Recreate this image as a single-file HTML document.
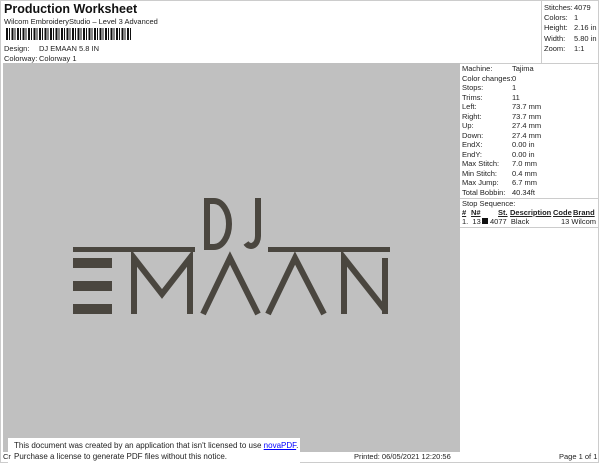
<!DOCTYPE html><html><head><style>
body{margin:0;width:600px;height:464px;background:#fff;font-family:"Liberation Sans",sans-serif;position:relative;overflow:hidden;color:#222}
.a{position:absolute;white-space:nowrap}
.s{font-size:7.5px}
</style></head><body>
<div class="a" style="left:0;top:0;width:599px;height:463px;border:1px solid #ccc;box-sizing:border-box"></div>
<div class="a" style="left:4px;top:2px;font-size:12.5px;font-weight:bold;color:#111">Production Worksheet</div>
<div class="a s" style="left:4px;top:17px">Wilcom EmbroideryStudio – Level 3 Advanced</div>
<div class="a" style="left:6px;top:28px;width:126px;height:12px;background:repeating-linear-gradient(90deg,#111 0 2px,#fff 2px 3px,#111 3px 4px,#fff 4px 5.5px)"></div>
<div class="a s" style="left:4px;top:44px">Design:</div><div class="a s" style="left:39px;top:44px">DJ EMAAN 5.8 IN</div>
<div class="a s" style="left:4px;top:54px">Colorway:</div><div class="a s" style="left:39px;top:54px">Colorway 1</div>
<div class="a" style="left:541px;top:0;width:1px;height:63px;background:#ccc"></div>
<div class="a s" style="left:544px;top:3px;line-height:10.2px">Stitches:<br>Colors:<br>Height:<br>Width:<br>Zoom:</div>
<div class="a s" style="left:574px;top:3px;line-height:10.2px">4079<br>1<br>2.16 in<br>5.80 in<br>1:1</div>
<div class="a" style="left:3px;top:63px;width:457px;height:389px;background:#c0c0c0"></div>
<div class="a" style="left:460px;top:63px;width:138px;height:1px;background:#ccc"></div>
<div class="a s" style="left:462px;top:64px;line-height:9.5px">Machine:<br>Color changes:<br>Stops:<br>Trims:<br>Left:<br>Right:<br>Up:<br>Down:<br>EndX:<br>EndY:<br>Max Stitch:<br>Min Stitch:<br>Max Jump:<br>Total Bobbin:</div>
<div class="a s" style="left:512px;top:64px;line-height:9.5px">Tajima<br>0<br>1<br>11<br>73.7 mm<br>73.7 mm<br>27.4 mm<br>27.4 mm<br>0.00 in<br>0.00 in<br>7.0 mm<br>0.4 mm<br>6.7 mm<br>40.34ft</div>
<div class="a" style="left:460px;top:198px;width:138px;height:1px;background:#ccc"></div>
<div class="a s" style="left:462px;top:199px">Stop Sequence:</div>
<div class="a s" style="left:462px;top:208px;font-weight:bold;text-decoration:underline">#</div>
<div class="a s" style="left:471px;top:208px;font-weight:bold;text-decoration:underline">N#</div>
<div class="a s" style="left:498px;top:208px;font-weight:bold;text-decoration:underline">St.</div>
<div class="a s" style="left:510px;top:208px;font-weight:bold;text-decoration:underline">Description</div>
<div class="a s" style="left:553px;top:208px;font-weight:bold;text-decoration:underline">Code</div>
<div class="a s" style="left:573px;top:208px;font-weight:bold;text-decoration:underline">Brand</div>
<div class="a s" style="left:462px;top:217px">1.&nbsp; 13</div>
<div class="a" style="left:482px;top:218px;width:6px;height:6px;background:#111"></div>
<div class="a s" style="left:490px;top:217px">4077&nbsp; Black</div>
<div class="a s" style="left:561px;top:217px">13 Wilcom</div>
<div class="a" style="left:460px;top:227px;width:138px;height:1px;background:#ccc"></div>
<svg class="a" style="left:0;top:0" width="600" height="464">
<g fill="#4a463f">
<rect x="73" y="247" width="122" height="5"/>
<rect x="268" y="247" width="122" height="5"/>
<rect x="73" y="258" width="39" height="10"/>
<rect x="73" y="281" width="39" height="10"/>
<rect x="73" y="304" width="39" height="10"/>
</g>
<g fill="none" stroke="#4a463f" stroke-width="6" stroke-linejoin="miter">
<path d="M207 198v52 M207 201h7a15 23 0 0 1 0 46h-7"/>
<path d="M258 198v38a7 10 0 0 1-12 7"/>
<path d="M134 314v-56l28 36l28-36v56"/>
<path d="M203 314l27-56l28 56"/>
<path d="M268 314l27-56l29 56"/>
<path d="M344 314v-56l41 52 M385 258v56"/>
</g></svg>
<div class="a" style="left:8px;top:438px;width:292px;height:25px;background:#fff"></div>
<div class="a s" style="left:14px;top:440px;font-size:8px;line-height:11px">This document was created by an application that isn't licensed to use <span style="color:#00f;text-decoration:underline">novaPDF</span>.<br>Purchase a license to generate PDF files without this notice.</div>
<div class="a s" style="left:3px;top:452px">Cr</div>
<div class="a s" style="left:354px;top:452px">Printed: 06/05/2021 12:20:56</div>
<div class="a s" style="left:559px;top:452px">Page 1 of 1</div>
</body></html>
